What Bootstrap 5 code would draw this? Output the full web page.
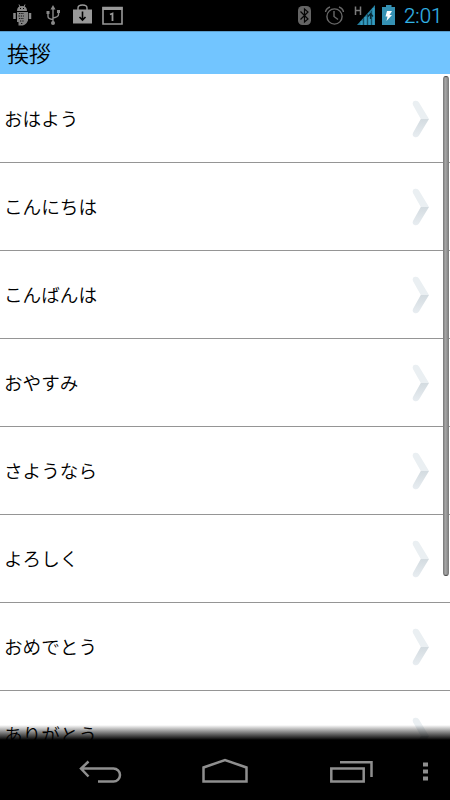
<!DOCTYPE html>
<html lang="ja">
<head>
<meta charset="utf-8">
<meta name="viewport" content="width=device-width, initial-scale=1">
<title>挨拶</title>
<link href="https://cdn.jsdelivr.net/npm/bootstrap@5.3.0/dist/css/bootstrap.min.css" rel="stylesheet">
<style>
body{font-family:"Noto Sans CJK JP",sans-serif;color:#000}
.status-bar{height:31px;padding:0 0 0 12px}
.clock{font:300 20.5px/31px Roboto,sans-serif;color:#33b5e5;width:46px;-webkit-text-stroke:.2px #33b5e5;margin-left:8px;padding-top:1px}
.title-bar{height:43px;background:#72c5ff;font-size:22px;line-height:40px;padding-left:7px;font-weight:350;border-top:1px solid #5b9ecc}
.phrases{min-height:0;padding-top:1px}
.phrases .list-group-item{height:88px;flex:none;padding:1px 20px 0 4px;border:0;border-bottom:1px solid #959595;font-size:18.6px;line-height:1;color:#000;font-weight:350}
.phrase-text{padding-bottom:2px}
.fade-edge{height:15px;background:linear-gradient(rgba(0,0,0,0),#000)}
.thumb{top:2px;right:1px;width:6px;height:500px;border-radius:3px;background:linear-gradient(90deg,#8c8c8c,#aaa 45%,#9c9c9c 60%,#858585);border:1px solid #808080;border-top-color:#444;border-bottom-color:#444}
.system-nav{height:60px}
</style>
<script src="https://cdn.jsdelivr.net/npm/bootstrap@5.3.0/dist/js/bootstrap.bundle.min.js"></script>
</head>
<body class="vh-100 overflow-hidden bg-white d-flex flex-column">
<svg class="position-absolute" width="0" height="0">
<defs><linearGradient id="lower" x1="0" y1="0" x2="0" y2="1"><stop stop-color="#d3dbe0"/><stop offset="1" stop-color="#e8edf1"/></linearGradient></defs>
</svg>
<header class="status-bar bg-black d-flex align-items-start flex-shrink-0">
<svg width="115" height="31" viewBox="12 0 115 31" fill="none" stroke="#898989">
<path d="M17 11Q17 6 22 6Q27 6 27 11Z" fill="#898989" stroke="none"/>
<path d="M19 4.5L20 7M25 4.5L24 7"/>
<path d="M17 12H28V20.500Q26 25 22.500 25.500H18.500V22H17Z" fill="#828282" stroke="none"/>
<path d="M14.500 13V19M30 13V19" stroke-width="2.500"/>
<path d="M19 13.500H24M18.500 16H24M19 18.500H24M20 21H24M21 23.500H23" stroke="#111" stroke-width="1.2" stroke-dasharray="1.3 1"/>
<path d="M20 8.500H21M23 8.500H24" stroke="#000"/>
<path d="M53 8V23M53 19.500Q48 19 48 16.500V13M53 18Q58.500 17 58.500 14.500V11" stroke-width="1.4"/>
<path d="M53 5L50.500 9.500H55.500ZM46.500 11H49.500V14H46.500ZM57 10H60V13H57Z" fill="#898989" stroke="none"/>
<circle cx="53" cy="23" r="2" fill="#898989" stroke="none"/>
<path d="M73 9.500H92V23.500H73Z" fill="#999" stroke="none"/>
<path d="M78 10V8Q78 5 82.500 5Q87 5 87 8V10" stroke="#999" stroke-width="1.4"/>
<path d="M82.500 11.500V20M79.500 17L82.500 20L85.500 17" stroke="#000" stroke-width="1.6"/>
<path d="M103 7.500H122V24H103Z" stroke="#999" stroke-width="1.6"/>
<path d="M102.500 8.500H122.500" stroke="#999" stroke-width="3"/>
<path d="M110 14.500L112.500 13.500V21" stroke="#999" stroke-width="1.8"/>
</svg>
<svg class="ms-auto" width="100" height="31" viewBox="296 0 100 31" fill="none">
<rect x="298" y="6" width="13" height="19" rx="4.500" fill="#646464"/>
<path d="M300.500 11.500L308 19L304.500 22V9L308 12L300.500 19.500" stroke="#050505" stroke-width="1.2"/>
<circle cx="334.500" cy="16.500" r="7.600" stroke="#686868" stroke-width="1.4"/>
<path d="M334 11V16.500L338 19.500M325.500 12Q326 8.500 330 7M343.500 12Q343 8.500 339 7" stroke="#686868" stroke-width="1.4"/>
<path d="M355.500 6.500V15M360.500 6.500V15M355.500 10.500H360.500" stroke="#7b7b7b" stroke-width="1.5"/>
<path d="M357 25L375 5V25Z" fill="#247c9c"/>
<path d="M361.500 21V25M365.500 17V25M369.500 13V25M373.500 8V25" stroke="#359bc0" stroke-width="2"/>
<path d="M363.500 18V25M367.500 14V25M371.500 11V25" stroke="#103f51" stroke-width=".7"/>
<path d="M370.500 19V13.500M368 16.500L370.500 13.500L373 16.500" stroke="#082935" stroke-width="1.3"/>
<path d="M382 7H386V5H391.500V7H395V25H382Z" fill="#3591b3"/>
<path d="M387 11H392L389.500 15H392L386.500 21L387.500 16.500H385.500Z" fill="#fff"/>
</svg>
<span class="clock">2:01</span>
</header>
<h1 class="title-bar mb-0 flex-shrink-0">挨拶</h1>
<main class="phrases position-relative flex-grow-1 overflow-hidden">
<div class="list-group list-group-flush" id="phraseList"></div>
<div class="thumb position-absolute"></div>
<div class="fade-edge position-absolute bottom-0 start-0 end-0"></div>
</main>
<nav class="system-nav bg-black flex-shrink-0">
<svg class="d-block" width="450" height="60" viewBox="0 740 450 60" fill="none" stroke="#8f8f8f" stroke-width="2.500">
<path d="M81 768.500H113.500A6.500 6.500 0 0 1 113.500 781.500H98M88.500 761.500L81 768.500L88.500 776.500"/>
<path d="M203.500 781.500V767.500L225 760L246.500 767.500V781.500Z"/>
<path d="M331.300 768.500H363.700V781.500H331.300ZM340 762.300H371.500V777"/>
<path d="M423 762.500H428V766.500H423ZM423 769.500H428V773.500H423ZM423 776.500H428V780.500H423Z" fill="#8f8f8f" stroke="none"/>
</svg>
</nav>
<script>
document.getElementById('phraseList').innerHTML =
['おはよう','こんにちは','こんばんは','おやすみ','さようなら','よろしく','おめでとう','ありがとう'].map(t =>
`<div class="list-group-item d-flex align-items-center justify-content-between"><span class="phrase-text">${t}</span>
<svg width="18" height="38" viewBox="0 0 18 38"><path d="M1.200 5.500Q-.5 1.500 3 .8Q5.800 .2 7 2.500L17 19H8.800Z" fill="#eaeff2"/><path d="M8.800 19H17L7 35.500Q5.800 37.800 3 37.200Q-.5 36.500 1.200 32.500Z" fill="url(#lower)"/></svg></div>`).join('');
</script>
</body>
</html>
